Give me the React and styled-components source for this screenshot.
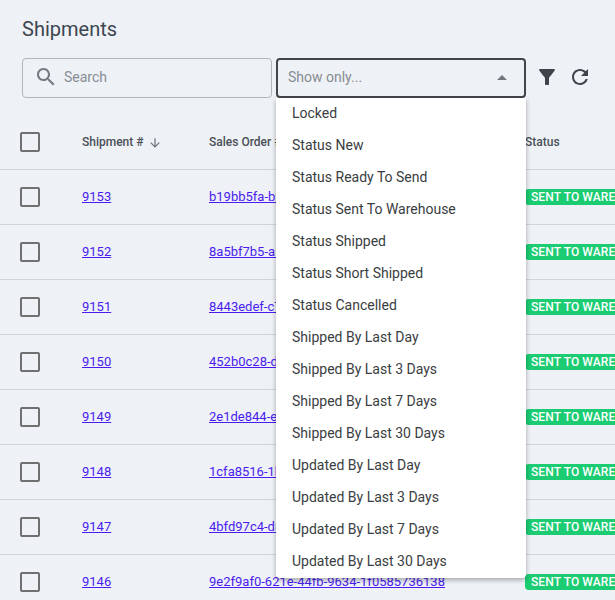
import React from 'react';
import styled, { createGlobalStyle } from 'styled-components';

const GlobalStyle = createGlobalStyle`
  html, body {
    margin: 0;
    height: 100%;
    overflow: hidden;
    background: #eef1f6;
    font-family: Roboto, "Liberation Sans", sans-serif;
  }
`;

const Page = styled.div`
  width: 615px;
  height: 600px;
  overflow: hidden;
`;

const Title = styled.h1`
  margin: 0;
  box-sizing: border-box;
  padding: 16px 22px 0;
  height: 58px;
  font-size: 20px;
  line-height: 26px;
  font-weight: 400;
  color: #3d4650;
`;

const Toolbar = styled.div`
  display: flex;
  align-items: center;
  gap: 4px;
  height: 40px;
  padding-left: 22px;
`;

const SearchBox = styled.div`
  box-sizing: border-box;
  width: 250px;
  height: 40px;
  display: flex;
  align-items: center;
  gap: 6px;
  padding: 0 0 2px 11px;
  border: 1px solid #b2b6bb;
  border-radius: 4px;
  font-size: 14px;
  color: #888d93;
`;

const SelectWrap = styled.div`
  position: relative;
  width: 250px;
`;

const SelectBox = styled.div`
  box-sizing: border-box;
  height: 40px;
  display: flex;
  align-items: center;
  justify-content: space-between;
  padding: 0 17px 2px 10px;
  border: 2px solid #42464b;
  border-radius: 4px;
  font-size: 14px;
  color: #878c92;
`;

const DropArrow = styled.svg`
  width: 10px;
  height: 5px;
  fill: #73787e;
`;

const Menu = styled.ul`
  position: absolute;
  z-index: 2;
  top: 40px;
  left: 0;
  right: 0;
  margin: 0;
  padding: 0;
  list-style: none;
  background: #fff;
  border-radius: 0 0 4px 4px;
  box-shadow: 0 2px 5px rgba(0, 0, 0, 0.32);
`;

const MenuItem = styled.li`
  height: 32px;
  padding-left: 16px;
  font-size: 14px;
  line-height: 30px;
  color: #3a3d41;
`;

const Actions = styled.div`
  display: flex;
  align-items: center;
  gap: 9px;
  margin: 0 0 2px 5px;
`;

const ActionIcon = styled.svg`
  display: block;
  width: 24px;
  height: 24px;
  fill: ${(p) => p.$color || '#3f444a'};
`;

const HeaderRow = styled.div`
  display: grid;
  grid-template-columns: 62px 127px 316px 1fr;
  align-items: center;
  box-sizing: border-box;
  height: 72px;
  padding: 17px 0 1px 20px;
  border-bottom: 1px solid #d2d5da;
  font-size: 12px;
  font-weight: 500;
  color: #4a5057;
  white-space: nowrap;
`;

const Row = styled.div`
  display: grid;
  grid-template-columns: 62px 127px 316px 1fr;
  align-items: center;
  box-sizing: border-box;
  height: 55px;
  padding-left: 20px;
  border-bottom: 1px solid #d2d5da;
  font-size: 13px;
  white-space: nowrap;
  overflow: hidden;
`;

const Checkbox = styled.span`
  display: block;
  box-sizing: border-box;
  width: 20px;
  height: 20px;
  border: 2px solid #707070;
  border-radius: 2px;
`;

const HeaderCell = styled.div`
  display: flex;
  align-items: center;
  gap: 4px;
`;

const SortIcon = styled.svg`
  width: 14px;
  height: 14px;
  margin-top: 2px;
  fill: #6b7076;
`;

const LinkCell = styled.div`
  margin-bottom: 2px;
`;

const Link = styled.a`
  color: #4a1cf0;
  text-decoration: underline;
`;

const Badge = styled.span`
  display: inline-block;
  padding: 0 6px;
  height: 16px;
  line-height: 16px;
  border-radius: 4px;
  background: #1bcc72;
  color: #fff;
  font-size: 12px;
  font-weight: 500;
  letter-spacing: 0.1px;
`;

const options = [
  'Locked',
  'Status New',
  'Status Ready To Send',
  'Status Sent To Warehouse',
  'Status Shipped',
  'Status Short Shipped',
  'Status Cancelled',
  'Shipped By Last Day',
  'Shipped By Last 3 Days',
  'Shipped By Last 7 Days',
  'Shipped By Last 30 Days',
  'Updated By Last Day',
  'Updated By Last 3 Days',
  'Updated By Last 7 Days',
  'Updated By Last 30 Days',
];

const shipments = [
  { id: 9153, order: 'b19bb5fa-b2c4-4e1a-9d3f-6a7c1e205f41' },
  { id: 9152, order: '8a5bf7b5-a1d2-47c6-8e90-3b6f4d812a07' },
  { id: 9151, order: '8443edef-c7a9-4b35-a216-90d7e3c15b68' },
  { id: 9150, order: '452b0c28-d3e6-41f8-b7a4-5c28f6e09d13' },
  { id: 9149, order: '2e1de844-e05b-4c97-93d1-7fa2b8604c2e' },
  { id: 9148, order: '1cfa8516-1b7e-4d20-a6c3-e49d07f3182b' },
  { id: 9147, order: '4bfd97c4-d86a-4f13-8b52-16c3a9e7d540' },
  { id: 9146, order: '9e2f9af0-621e-44fb-9634-1f0585736138' },
];

const App = () => (
  <Page>
    <GlobalStyle />
    <Title>Shipments</Title>
    <Toolbar>
      <SearchBox>
        <ActionIcon viewBox="0 0 24 24" $color="#73787e">
          <path d="M15.5 14h-.79l-.28-.27C15.41 12.59 16 11.11 16 9.5 16 5.91 13.09 3 9.5 3S3 5.91 3 9.5 5.91 16 9.5 16c1.61 0 3.09-.59 4.23-1.57l.27.28v.79l5 4.99L20.49 19l-4.99-5zm-6 0C7.01 14 5 11.99 5 9.5S7.01 5 9.5 5 14 7.01 14 9.5 11.99 14 9.5 14z" />
        </ActionIcon>
        Search
      </SearchBox>
      <SelectWrap>
        <SelectBox>
          Show only...
          <DropArrow viewBox="7 9 10 5">
            <path d="M7 14l5-5 5 5z" />
          </DropArrow>
        </SelectBox>
        <Menu>
          {options.map((option) => (
            <MenuItem key={option}>{option}</MenuItem>
          ))}
        </Menu>
      </SelectWrap>
      <Actions>
        <ActionIcon viewBox="0 0 24 24">
          <path d="M4.25 5.61C6.27 8.2 10 13 10 13v6c0 .55.45 1 1 1h2c.55 0 1-.45 1-1v-6s3.72-4.8 5.74-7.39c.51-.66.04-1.61-.79-1.61H5.04c-.83 0-1.3.95-.79 1.61z" />
        </ActionIcon>
        <ActionIcon viewBox="0 0 24 24">
          <path d="M17.65 6.35C16.2 4.9 14.21 4 12 4c-4.42 0-7.99 3.58-7.99 8s3.57 8 7.99 8c3.73 0 6.84-2.55 7.73-6h-2.08c-.82 2.33-3.04 4-5.65 4-3.31 0-6-2.69-6-6s2.69-6 6-6c1.66 0 3.14.69 4.22 1.78L13 11h7V4l-2.35 2.35z" />
        </ActionIcon>
      </Actions>
    </Toolbar>
    <HeaderRow>
      <Checkbox />
      <HeaderCell>
        Shipment #
        <SortIcon viewBox="0 0 24 24">
          <path d="M20 12l-1.41-1.41L13 16.17V4h-2v12.17l-5.58-5.59L4 12l8 8 8-8z" />
        </SortIcon>
      </HeaderCell>
      <HeaderCell>Sales Order #</HeaderCell>
      <HeaderCell>Status</HeaderCell>
    </HeaderRow>
    {shipments.map((shipment) => (
      <Row key={shipment.id}>
        <Checkbox />
        <LinkCell>
          <Link href="#">{shipment.id}</Link>
        </LinkCell>
        <LinkCell>
          <Link href="#">{shipment.order}</Link>
        </LinkCell>
        <div>
          <Badge>SENT TO WAREHOUSE</Badge>
        </div>
      </Row>
    ))}
  </Page>
);

export default App;
